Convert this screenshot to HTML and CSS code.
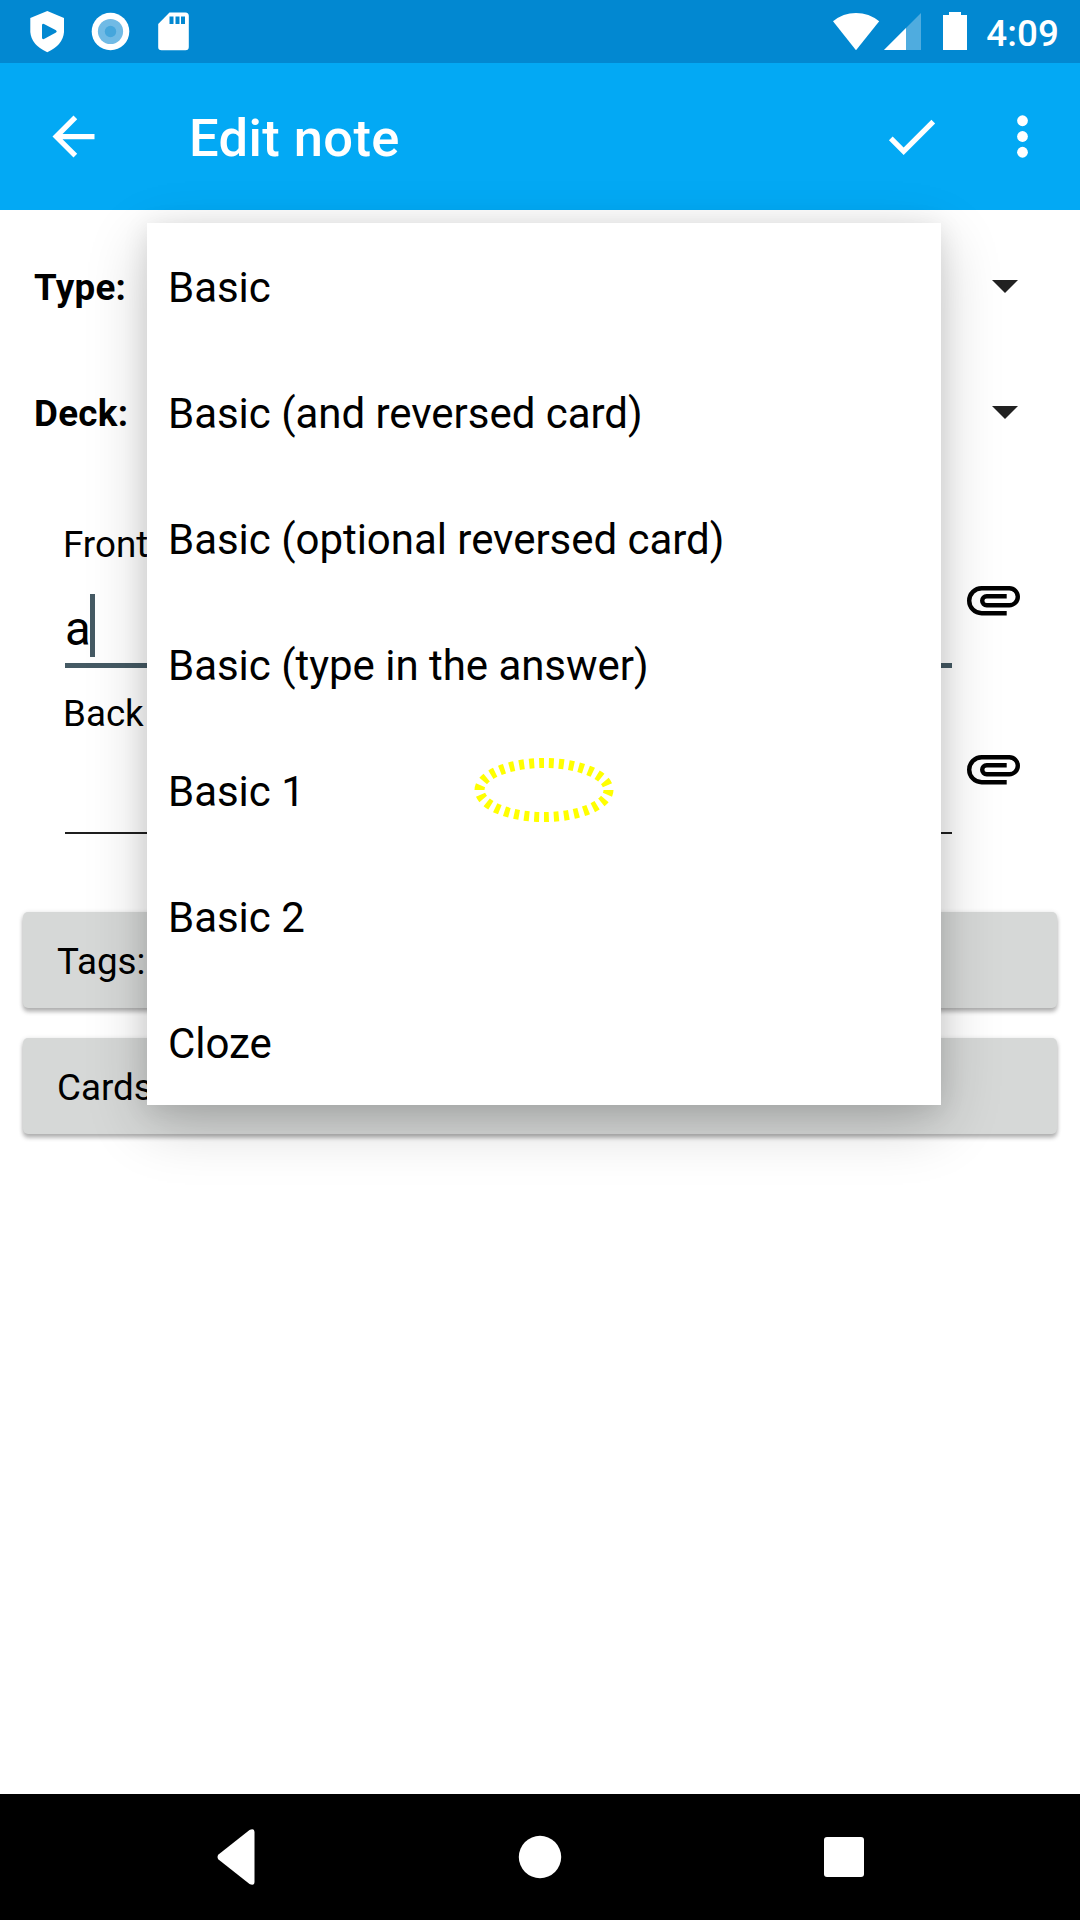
FILE: index.html
```html
<!DOCTYPE html>
<html lang="en">
<head>
<meta charset="utf-8">
<title>Edit note</title>
<link rel="stylesheet" href="styles.css">
</head>
<body>
<div class="screen">
  <header class="status-bar">
    <svg class="status-left" width="200" height="63" viewBox="0 0 200 63">
      <path fill="#fff" d="M47.300 11L64 18V32Q63 45 47.300 52.200Q31.300 45 30.300 32V18Z"/>
      <path fill="#0288d1" d="M42 24.500Q42.500 23.500 44 24L56 30.300Q57.500 31.500 56 32.500L44 39Q42.200 39.500 42 38Z"/>
      <circle cx="110.500" cy="31.500" r="18.800" fill="#fff"/>
      <circle cx="110.500" cy="31.500" r="12.600" fill="#70bae5"/>
      <circle cx="110.500" cy="31.500" r="5.700" fill="#45a6dc"/>
      <path fill="#fff" d="M169.500 12.500H185.500Q188.800 12.500 188.800 16V47Q188.800 50.300 185.500 50.300H161.500Q158.200 50.300 158.200 47V24Z"/>
      <path fill="#0288d1" d="M169.500 16.500h4v7.500h-4zM175.500 16.500h4v7.500h-4zM181 16.500h4v7.500h-4z"/>
    </svg>
    <div class="status-right">
      <svg width="140" height="63" viewBox="830 0 140 63">
        <path fill="#fff" d="M833 21.300Q843 13 856 13T879.200 21.300L856 50.200Z"/>
        <path fill="#4facdf" d="M921 13V50H884Z"/>
        <path fill="#fff" d="M906 28V50H884Z"/>
        <path fill="#fff" d="M949 12h12v3h6v35h-24v-35h6z"/>
      </svg>
      <span class="clock">4:09</span>
    </div>
  </header>

  <div class="toolbar">
    <svg class="icon" viewBox="0 0 24 24"><path d="M20 11H7.830l5.590-5.590L12 4l-8 8 8 8 1.410-1.410L7.830 13H20z"/></svg>
    <h1 class="title">Edit note</h1>
    <svg class="icon" viewBox="0 0 24 24"><path d="M9 16.170L4.830 12l-1.420 1.410L9 19 21 7l-1.410-1.410z"/></svg>
    <svg class="icon overflow" viewBox="0 0 24 24"><circle cx="12" cy="6" r="2.050"/><circle cx="12" cy="12" r="2.050"/><circle cx="12" cy="18" r="2.050"/></svg>
  </div>

  <main class="content">
    <div class="spinner-row"><span>Type:</span><svg class="caret" width="26" height="13" viewBox="0 0 26 13"><path d="M0 0H26L13 13z"/></svg></div>
    <div class="spinner-row"><span>Deck:</span><svg class="caret" width="26" height="13" viewBox="0 0 26 13"><path d="M0 0H26L13 13z"/></svg></div>

    <div class="fields">
      <div class="field">
        <div class="field-main">
          <div class="label">Front</div>
          <div class="input focused">a<span class="cursor"></span></div>
        </div>
        <svg class="clip" width="54" height="30" viewBox="0 0 54 30"><path d="M39.700 27.200H14.700A12.500 12.500 0 0 1 14.700 2.200H42.300A8.500 8.500 0 0 1 42.300 19.200H19.700A4.500 4.500 0 0 1 19.700 10.200H39.700"/></svg>
      </div>
      <div class="field">
        <div class="field-main">
          <div class="label">Back</div>
          <div class="input"></div>
        </div>
        <svg class="clip" width="54" height="30" viewBox="0 0 54 30"><path d="M39.700 27.200H14.700A12.500 12.500 0 0 1 14.700 2.200H42.300A8.500 8.500 0 0 1 42.300 19.200H19.700A4.500 4.500 0 0 1 19.700 10.200H39.700"/></svg>
      </div>
    </div>

    <div class="buttons">
      <div class="button">Tags:</div>
      <div class="button">Cards</div>
    </div>
  </main>

  <nav class="nav-bar">
    <svg width="1080" height="126" viewBox="0 0 1080 126">
      <path d="M218.500 60.500L249.500 36Q254.500 33.500 254.500 38.500V87.500Q254.500 92.500 249.500 90L218.500 65.500Q216.500 63 218.500 60.500Z"/>
      <circle cx="540" cy="63" r="21.200"/>
      <rect x="824" y="43" width="40" height="40" rx="3"/>
    </svg>
  </nav>

  <div class="popup">
    <div class="option">Basic</div>
    <div class="option">Basic (and reversed card)</div>
    <div class="option">Basic (optional reversed card)</div>
    <div class="option">Basic (type in the answer)</div>
    <div class="option">Basic 1</div>
    <div class="option">Basic 2</div>
    <div class="option">Cloze</div>
    <svg class="marker" width="144" height="68" viewBox="0 0 144 68"><ellipse cx="72" cy="34" rx="64.500" ry="27" pathLength="300"/></svg>
  </div>
</div>
</body>
</html>
```
FILE: styles.css
```css
* { box-sizing: border-box; }
body { margin: 0; font-family: Roboto, sans-serif; color: #000; background: #fff; }
.screen { position: relative; width: 1080px; height: 1920px; display: flex; flex-direction: column; overflow: hidden; }
svg { display: block; flex: none; }

.status-bar { height: 63px; background: #0288d1; display: flex; justify-content: space-between; }
.status-right { display: flex; align-items: center; gap: 16px; padding-right: 21px; }
.clock { color: #fff; font-size: 36.75px; font-weight: 500; line-height: 43px; letter-spacing: .1px; padding-top: 3px; }

.toolbar { height: 147px; background: #03a9f4; display: flex; align-items: center; padding: 0 26px 0 42px; }
.icon { width: 63px; height: 63px; fill: #fff; }
.title { flex: 1; margin: 0; padding: 3px 0 0 84px; font-size: 52.5px; font-weight: 500; line-height: 62px; letter-spacing: .4px; color: #fff; }
.overflow { margin-left: 48px; }

.content { flex: 1; padding-top: 13px; }
.spinner-row { height: 126px; display: flex; align-items: center; justify-content: space-between; padding: 0 62.5px 0 34px; font-size: 36.75px; font-weight: 700; letter-spacing: .3px; }
.spinner-row span { padding-top: 3px; }
.caret { fill: #212121; }

.fields { padding: 46px 59px 0 65px; }
.field { height: 169px; display: flex; justify-content: space-between; }
.field-main { width: 887px; }
.label { font-size: 36.75px; line-height: 43px; padding-top: 2px; margin-left: -2px; }
.input { height: 93px; margin-top: 26px; font-size: 47.25px; line-height: 63px; display: flex; align-items: flex-start; background: linear-gradient(#1f1f1f, #1f1f1f) 0 71px / 100% 2px no-repeat; }
.input.focused { padding-top: 6px; background: linear-gradient(#455a64, #455a64) 0 71px / 100% 5px no-repeat; }
.cursor { width: 5px; height: 63px; margin: -4px 0 0 -1px; background: #455a64; }
.clip { margin-top: 65px; fill: none; stroke: #000; stroke-width: 4.4; }

.buttons { padding: 53px 23px 0; display: flex; flex-direction: column; gap: 30px; }
.button { height: 96px; border-radius: 5px; background: #d6d8d7; padding: 2px 0 0 34px; font-size: 36.75px; line-height: 96px; box-shadow: 0 4px 4px rgba(0,0,0,.24), 0 1px 5px rgba(0,0,0,.16); }

.nav-bar { height: 126px; background: #000; fill: #fff; }

.popup { position: absolute; left: 147px; top: 223px; width: 794px; background: #fff; box-shadow: 0 19px 58px rgba(0,0,0,.2), 0 4px 24px rgba(0,0,0,.1); }
.option { height: 126px; padding: 2px 0 0 21px; font-size: 42px; line-height: 126px; letter-spacing: -.03px; }
.marker { position: absolute; left: 325px; top: 533px; fill: none; stroke: #ff0; stroke-width: 10; stroke-dasharray: 5 5; }
```
